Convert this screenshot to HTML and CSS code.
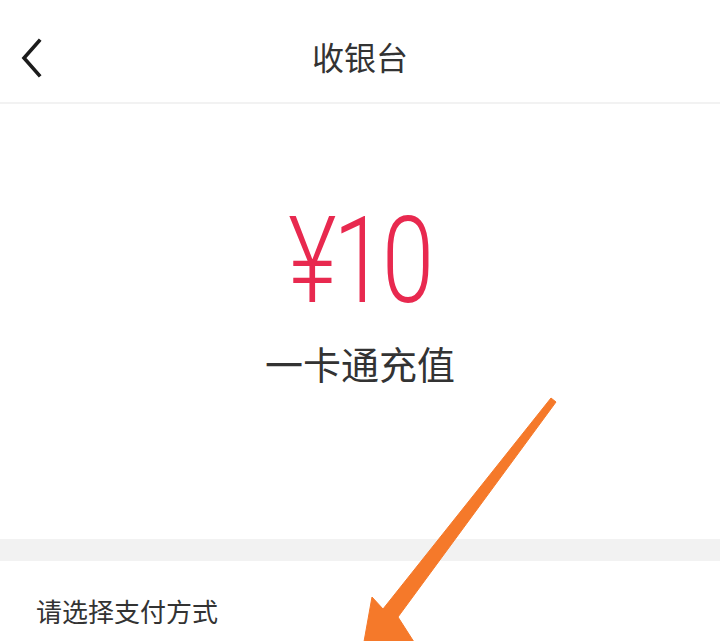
FILE: index.html
```html
<!DOCTYPE html>
<html lang="zh-CN">
<head>
  <meta charset="UTF-8" />
  <meta name="viewport" content="width=device-width, initial-scale=1.0"/>
  <title>收银台</title>
  <link rel="stylesheet" href="styles.css">
</head>
<body>

  <!-- Top bar -->
  <header class="nav">
    <a href="#" class="back-button" aria-label="返回">
      <svg width="24" height="40" viewBox="0 0 24 40">
        <polyline points="19,3 4,20 19,37" fill="none" stroke="#1c1c1c" stroke-width="3.6" stroke-linecap="square" stroke-linejoin="miter"/>
      </svg>
    </a>
    <h1 class="nav-title">收银台</h1>
  </header>

  <!-- Order amount -->
  <section class="order">
    <div class="price">¥10</div>
    <p class="order-name">一卡通充值</p>
  </section>

  <div class="gap"></div>

  <!-- Payment methods -->
  <section class="pay">
    <p class="pay-label">请选择支付方式</p>
  </section>

  <!-- Annotation arrow over the page -->
  <svg class="hint-arrow" width="720" height="641" viewBox="0 0 720 641">
    <polygon points="551,398 556,402 398,617 414,642 360,664 372,597 383,609" fill="#f5792a" stroke="#f5792a" stroke-width="1" stroke-linejoin="round"/>
  </svg>

</body>
</html>
```

FILE: styles.css
```css
body {
  margin: 0;
  background-color: #fff;
  font-family: "Noto Sans CJK SC", "Noto Sans", sans-serif;
  color: #333;
  overflow: hidden;
}

.nav {
  position: relative;
  height: 102px;
  border-bottom: 2px solid #f2f2f2;
  display: flex;
  align-items: center;
  justify-content: center;
}

.back-button {
  position: absolute;
  left: 20px;
  top: 38px;
  display: block;
  line-height: 0;
}

.nav-title {
  margin: 0;
  font-size: 32px;
  font-weight: normal;
  line-height: 32px;
  color: #333;
  padding-top: 10px;
}

.order {
  padding-top: 97px;
  padding-bottom: 157px;
  text-align: center;
}

.price {
  display: inline-block;
  font-family: Roboto, "Liberation Sans", sans-serif;
  font-weight: 300;
  font-size: 120px;
  line-height: 120px;
  color: #e8294f;
  letter-spacing: -4px;
  transform: scaleX(0.78);
}

.order-name {
  margin: 23px 0 0;
  font-size: 38px;
  line-height: 38px;
  color: #333;
}

.gap {
  height: 22px;
  background-color: #f2f2f2;
}

.pay {
  padding: 37px 36px 0;
}

.pay-label {
  margin: 0;
  font-size: 26px;
  line-height: 26px;
  color: #333;
}

.hint-arrow {
  position: absolute;
  left: 0;
  top: 0;
  pointer-events: none;
}
```
